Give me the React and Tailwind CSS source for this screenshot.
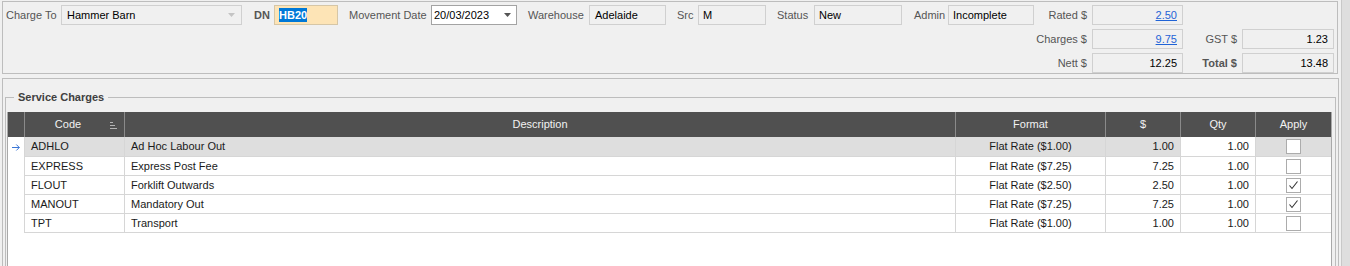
import React from 'react';

const rows = [
  { code: 'ADHLO', desc: 'Ad Hoc Labour Out', fmt: 'Flat Rate ($1.00)', price: '1.00', qty: '1.00', apply: false, sel: true },
  { code: 'EXPRESS', desc: 'Express Post Fee', fmt: 'Flat Rate ($7.25)', price: '7.25', qty: '1.00', apply: false },
  { code: 'FLOUT', desc: 'Forklift Outwards', fmt: 'Flat Rate ($2.50)', price: '2.50', qty: '1.00', apply: true },
  { code: 'MANOUT', desc: 'Mandatory Out', fmt: 'Flat Rate ($7.25)', price: '7.25', qty: '1.00', apply: true },
  { code: 'TPT', desc: 'Transport', fmt: 'Flat Rate ($1.00)', price: '1.00', qty: '1.00', apply: false },
];

function Label({ className = '', children }) {
  return <div className={`h-[20px] leading-[20px] text-[#555555] whitespace-nowrap ${className}`}>{children}</div>;
}

function Field({ className = '', children }) {
  return (
    <div className={`h-[20px] border leading-[18px] text-black whitespace-nowrap ${className}`}>{children}</div>
  );
}

function Caret({ color }) {
  return (
    <svg width="7" height="4" viewBox="0 0 7 4" className="shrink-0">
      <path d="M0 0 H7 L3.5 4 Z" fill={color} />
    </svg>
  );
}

function TopPanel() {
  const ro = 'border-[#d0d0d0] bg-[#f0f0f0]';
  return (
    <div className="flex h-[76px] w-[1336px] border border-[#bdbdbd] pl-[3px] pt-[3px]">
      <div className="flex items-start">
        <Label className="w-[55px]">Charge To</Label>
        <Field className={`flex w-[181px] items-center justify-between pl-[5px] pr-[6px] ${ro}`}>
          <span>Hammer Barn</span>
          <Caret color="#c4c4c4" />
        </Field>
        <Label className="ml-[12px] w-[20px] font-bold text-[#3c3c3c]">DN</Label>
        <Field className="w-[64px] border-[#d6c6a6] bg-[#fde4b6] pl-[4px]">
          <span className="bg-[#0078d7] py-[1px] font-bold text-white">HB20</span>
        </Field>
        <Label className="ml-[11px] w-[82px]">Movement Date</Label>
        <Field className="flex w-[86px] items-center justify-between border-[#a3a3a3] bg-white pl-[2px] pr-[5px]">
          <span>20/03/2023</span>
          <Caret color="#555555" />
        </Field>
        <Label className="ml-[11px] w-[61px]">Warehouse</Label>
        <Field className={`w-[77px] pl-[5px] ${ro}`}>Adelaide</Field>
        <Label className="ml-[11px] w-[21px]">Src</Label>
        <Field className={`w-[68px] pl-[4px] ${ro}`}>M</Field>
        <Label className="ml-[11px] w-[37px]">Status</Label>
        <Field className={`w-[88px] pl-[4px] ${ro}`}>New</Field>
        <Label className="ml-[12px] w-[34px]">Admin</Label>
        <Field className={`w-[86px] pl-[4px] ${ro}`}>Incomplete</Field>
      </div>
      <div className="grid grid-cols-[58px_91px_59px_92px] gap-y-[4px]">
        <Label className="pr-[5px] text-right">Rated $</Label>
        <Field className={`pr-[5px] text-right ${ro}`}>
          <span className="text-[#1f63d6] underline">2.50</span>
        </Field>
        <div />
        <div />
        <Label className="pr-[5px] text-right">Charges $</Label>
        <Field className={`pr-[5px] text-right ${ro}`}>
          <span className="text-[#1f63d6] underline">9.75</span>
        </Field>
        <Label className="pr-[5px] text-right">GST $</Label>
        <Field className={`pr-[5px] text-right ${ro}`}>1.23</Field>
        <Label className="pr-[5px] text-right">Nett $</Label>
        <Field className={`pr-[5px] text-right ${ro}`}>12.25</Field>
        <Label className="pr-[5px] text-right font-bold text-[#3c3c3c]">Total $</Label>
        <Field className={`pr-[5px] text-right ${ro}`}>13.48</Field>
      </div>
    </div>
  );
}

function SortIcon() {
  return (
    <svg width="7" height="7" viewBox="0 0 7 7" className="mt-[2px] shrink-0">
      <path d="M0 0.5 H3 M0 3.5 H5 M0 6.5 H7" stroke="#b4b4b4" strokeWidth="1" />
    </svg>
  );
}

function ServiceTable() {
  const head = 'flex h-full items-center justify-center border-l border-[#8a8a8a]';
  const cell = 'flex h-full items-center border-l border-[#d6d6d6]';
  return (
    <div className="h-[200px] w-[1325px] border-x border-[#a9a9a9] bg-white text-[#1a1a1a]">
      <div className="flex h-[25px] bg-[#505050] text-[#f2f2f2]">
        <div className="w-[16px]" />
        <div className={`${head} w-[100px] pl-[1px] pr-[7px]`}>
          <span className="flex-1 text-center">Code</span>
          <SortIcon />
        </div>
        <div className={`${head} w-[831px]`}>Description</div>
        <div className={`${head} w-[150px]`}>Format</div>
        <div className={`${head} w-[75px]`}>$</div>
        <div className={`${head} w-[75px]`}>Qty</div>
        <div className={`${head} w-[76px]`}>Apply</div>
      </div>
      {rows.map((r, i) => (
        <div key={r.code} className={`flex ${i === 0 ? 'h-[20px]' : 'h-[19px]'}`}>
          <div className="flex w-[16px] items-center pl-[4px]">
            {r.sel && (
              <svg width="8" height="7" viewBox="0 0 8 7">
                <path d="M0 3.5 H7.3 M4.3 0.5 L7.3 3.5 L4.3 6.5" stroke="#3a76d6" strokeWidth="1" fill="none" />
              </svg>
            )}
          </div>
          <div className={`flex flex-1 border-b border-[#d6d6d6] ${r.sel ? 'bg-[#dedede]' : 'bg-white'}`}>
            <div className={`${cell} w-[100px] pl-[6px]`}>{r.code}</div>
            <div className={`${cell} w-[831px] pl-[6px]`}>{r.desc}</div>
            <div className={`${cell} w-[150px] justify-center`}>{r.fmt}</div>
            <div className={`${cell} w-[75px] justify-end pr-[6px]`}>{r.price}</div>
            <div className={`${cell} w-[75px] justify-end bg-white pr-[6px]`}>{r.qty}</div>
            <div className={`${cell} w-[76px] justify-center`}>
              <div className="flex h-[15px] w-[15px] items-center justify-center border border-[#acacac] bg-white">
                {r.apply && (
                  <svg width="11" height="11" viewBox="0 0 11 11">
                    <path d="M1.5 5.5 L4 8.5 L9.5 1.5" stroke="#333333" strokeWidth="1.1" fill="none" />
                  </svg>
                )}
              </div>
            </div>
          </div>
        </div>
      ))}
    </div>
  );
}

export default function App() {
  return (
    <div className="flex h-[266px] w-[1350px] overflow-hidden bg-[#f0f0f0] font-['Liberation_Sans',Arial,sans-serif] text-[11px]">
      <div className="flex w-[1341px] flex-col pl-[2px] pt-[1px]">
        <TopPanel />
        <div className="mt-[4px] w-[1337px] flex-1 border border-b-0 border-[#bdbdbd] pl-[2px] pt-[11px]">
          <fieldset className="w-[1331px] border border-[#bdbdbd] pb-0 pl-[1px] pt-[8px]">
            <legend className="ml-[7px] px-[4px] text-[11px] leading-[14px] font-bold text-[#404040]">
              Service Charges
            </legend>
            <ServiceTable />
          </fieldset>
        </div>
      </div>
      <div className="flex-1 border-l border-[#c8c8c8] bg-[#dedede]" />
    </div>
  );
}
